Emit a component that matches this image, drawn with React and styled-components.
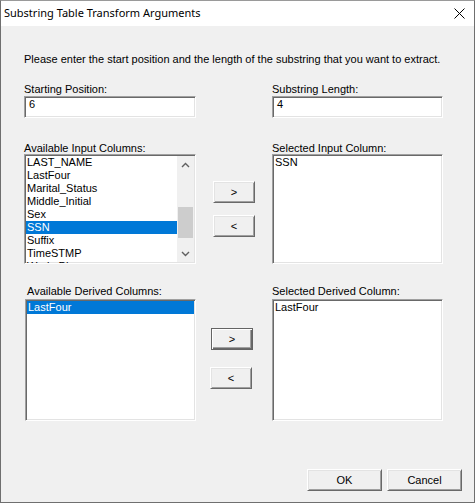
import React from "react";
import styled, { createGlobalStyle } from "styled-components";

const GlobalStyle = createGlobalStyle`
  html, body {
    margin: 0;
    padding: 0;
    background: #f0f0f0;
  }
  body {
    font-family: "Liberation Sans", Arial, sans-serif;
    font-size: 11px;
    color: #000;
  }
`;

const Window = styled.div`
  box-sizing: border-box;
  width: 475px;
  height: 503px;
  border: 1px solid #6f6f6f;
  border-top-color: #9a9a9a;
  background: #f0f0f0;
  display: flex;
  flex-direction: column;
`;

const TitleBar = styled.div`
  height: 25px;
  flex: none;
  background: #fff;
  display: flex;
  align-items: center;
  justify-content: space-between;
  padding: 0 9px 0 3px;
  font-family: "Noto Sans", "Liberation Sans", sans-serif;
  font-size: 11px;
  color: #000;
`;

const Title = styled.span`
  line-height: 16px;
  padding-bottom: 1px;
`;

const Content = styled.div`
  padding: 27px 31px 0 23px;
`;

const Intro = styled.div`
  line-height: 13px;
  white-space: nowrap;
`;

const Row = styled.div`
  display: grid;
  grid-template-columns: 172px 1fr 171px;
  margin-top: ${p => p.$top}px;
`;

const Field = styled.div`
  display: flex;
  flex-direction: column;
  grid-column: ${p => p.$col};
  padding-left: ${p => p.$indent || 0}px;
`;

const Label = styled.div`
  line-height: 12px;
  height: 12px;
  white-space: nowrap;
  padding-left: ${p => p.$indent || 0}px;
`;

const Sunken = styled.div`
  box-sizing: border-box;
  background: #fff;
  border: 1px solid;
  border-color: #a0a0a0 #fff #fff #a0a0a0;
  box-shadow: inset 1px 1px 0 #696969, inset -1px -1px 0 #e3e3e3;
`;

const TextField = styled(Sunken)`
  height: 22px;
  margin-top: 1px;
  padding: 1px 3px 0 4px;
  line-height: 13px;
`;

const ListBox = styled(Sunken)`
  height: ${p => p.$h}px;
  margin-top: ${p => p.$gap}px;
  padding: 1px 1px 0 1px;
  display: flex;
  overflow: hidden;
`;

const Items = styled.ul`
  flex: 1;
  list-style: none;
  margin: 0;
  padding: 0;
`;

const Item = styled.li`
  height: 13px;
  line-height: 13px;
  padding-left: 1px;
  white-space: nowrap;
  background: ${p => (p.$selected ? "#0078d7" : "transparent")};
  color: ${p => (p.$selected ? "#fff" : "#000")};
`;

const ScrollBar = styled.div`
  width: 17px;
  flex: none;
  display: flex;
  flex-direction: column;
  margin-bottom: 1px;
  background: #f0f0f0;
`;

const Arrow = styled.div`
  height: 17px;
  flex: none;
  display: flex;
  align-items: center;
  justify-content: center;
`;

const Track = styled.div`
  flex: 1;
  display: flex;
  flex-direction: column;
`;

const Thumb = styled.div`
  margin: ${p => p.$offset}px 1px 0;
  height: ${p => p.$size}px;
  background: #cdcdcd;
`;

const Movers = styled.div`
  display: flex;
  flex-direction: column;
  align-items: flex-start;
  gap: ${p => p.$gap}px;
  padding-top: ${p => p.$top}px;
  padding-left: ${p => p.$left}px;
`;

const Button = styled.button`
  box-sizing: border-box;
  width: ${p => p.$w}px;
  height: 22px;
  margin: 0;
  padding: 0;
  font-family: "Liberation Sans", Arial, sans-serif;
  font-size: 11px;
  color: #000;
  background: #f0f0f0;
  border: 1px solid;
  border-color: ${p => (p.$default ? "#646464" : "#fff #696969 #696969 #fff")};
  box-shadow: ${p =>
    p.$default
      ? "inset 1px 1px 0 #fff, inset -1px -1px 0 #696969, inset -2px -2px 0 #a0a0a0"
      : "inset 1px 1px 0 #e3e3e3, inset -1px -1px 0 #a0a0a0"};
  margin-left: ${p => p.$shift || 0}px;
`;

const Footer = styled.div`
  margin-top: auto;
  display: flex;
  justify-content: flex-end;
  gap: 5px;
  padding: 0 12px 11px 0;
`;

const Chevron = ({ up }) => (
  <svg width="9" height="6" viewBox="0 0 9 6">
    <path
      d={up ? "M1 5 L4.5 1.5 L8 5" : "M1 1 L4.5 4.5 L8 1"}
      fill="none"
      stroke="#606060"
      strokeWidth="1.4"
    />
  </svg>
);

const CloseIcon = () => (
  <svg width="11" height="11" viewBox="0 0 11 11">
    <path d="M0.5 0.5 L10.5 10.5 M10.5 0.5 L0.5 10.5" stroke="#000" strokeWidth="1" />
  </svg>
);

const inputColumns = [
  "LAST_NAME",
  "LastFour",
  "Marital_Status",
  "Middle_Initial",
  "Sex",
  "SSN",
  "Suffix",
  "TimeSTMP",
  "Work_Phone",
];

export default function App() {
  return (
    <>
      <GlobalStyle />
      <Window>
        <TitleBar>
          <Title>Substring Table Transform Arguments</Title>
          <CloseIcon />
        </TitleBar>
        <Content>
          <Intro>
            Please enter the start position and the length of the substring that you want to extract.
          </Intro>

          <Row $top={17}>
            <Field $col={1}>
              <Label>Starting Position:</Label>
              <TextField>6</TextField>
            </Field>
            <Field $col={3}>
              <Label>Substring Length:</Label>
              <TextField>4</TextField>
            </Field>
          </Row>

          <Row $top={24}>
            <Field $col={1}>
              <Label>Available Input Columns:</Label>
              <ListBox $h={110} $gap={0}>
                <Items>
                  {inputColumns.map(c => (
                    <Item key={c} $selected={c === "SSN"}>
                      {c}
                    </Item>
                  ))}
                </Items>
                <ScrollBar>
                  <Arrow>
                    <Chevron up />
                  </Arrow>
                  <Track>
                    <Thumb $offset={34} $size={31} />
                  </Track>
                  <Arrow>
                    <Chevron />
                  </Arrow>
                </ScrollBar>
              </ListBox>
            </Field>
            <Movers $top={39} $gap={12} $left={17}>
              <Button $w={42}>&gt;</Button>
              <Button $w={42}>&lt;</Button>
            </Movers>
            <Field $col={3}>
              <Label>Selected Input Column:</Label>
              <ListBox $h={110} $gap={0}>
                <Items>
                  <Item>SSN</Item>
                </Items>
              </ListBox>
            </Field>
          </Row>

          <Row $top={21}>
            <Field $col={1} $indent={1}>
              <Label $indent={2}>Available Derived Columns:</Label>
              <ListBox $h={122} $gap={2}>
                <Items>
                  <Item $selected>LastFour</Item>
                </Items>
              </ListBox>
            </Field>
            <Movers $top={43} $gap={17} $left={15}>
              <Button $w={42} $default>&gt;</Button>
              <Button $w={42} $shift={-1}>&lt;</Button>
            </Movers>
            <Field $col={3}>
              <Label>Selected Derived Column:</Label>
              <ListBox $h={122} $gap={2}>
                <Items>
                  <Item>LastFour</Item>
                </Items>
              </ListBox>
            </Field>
          </Row>
        </Content>
        <Footer>
          <Button $w={75}>OK</Button>
          <Button $w={75}>Cancel</Button>
        </Footer>
      </Window>
    </>
  );
}
